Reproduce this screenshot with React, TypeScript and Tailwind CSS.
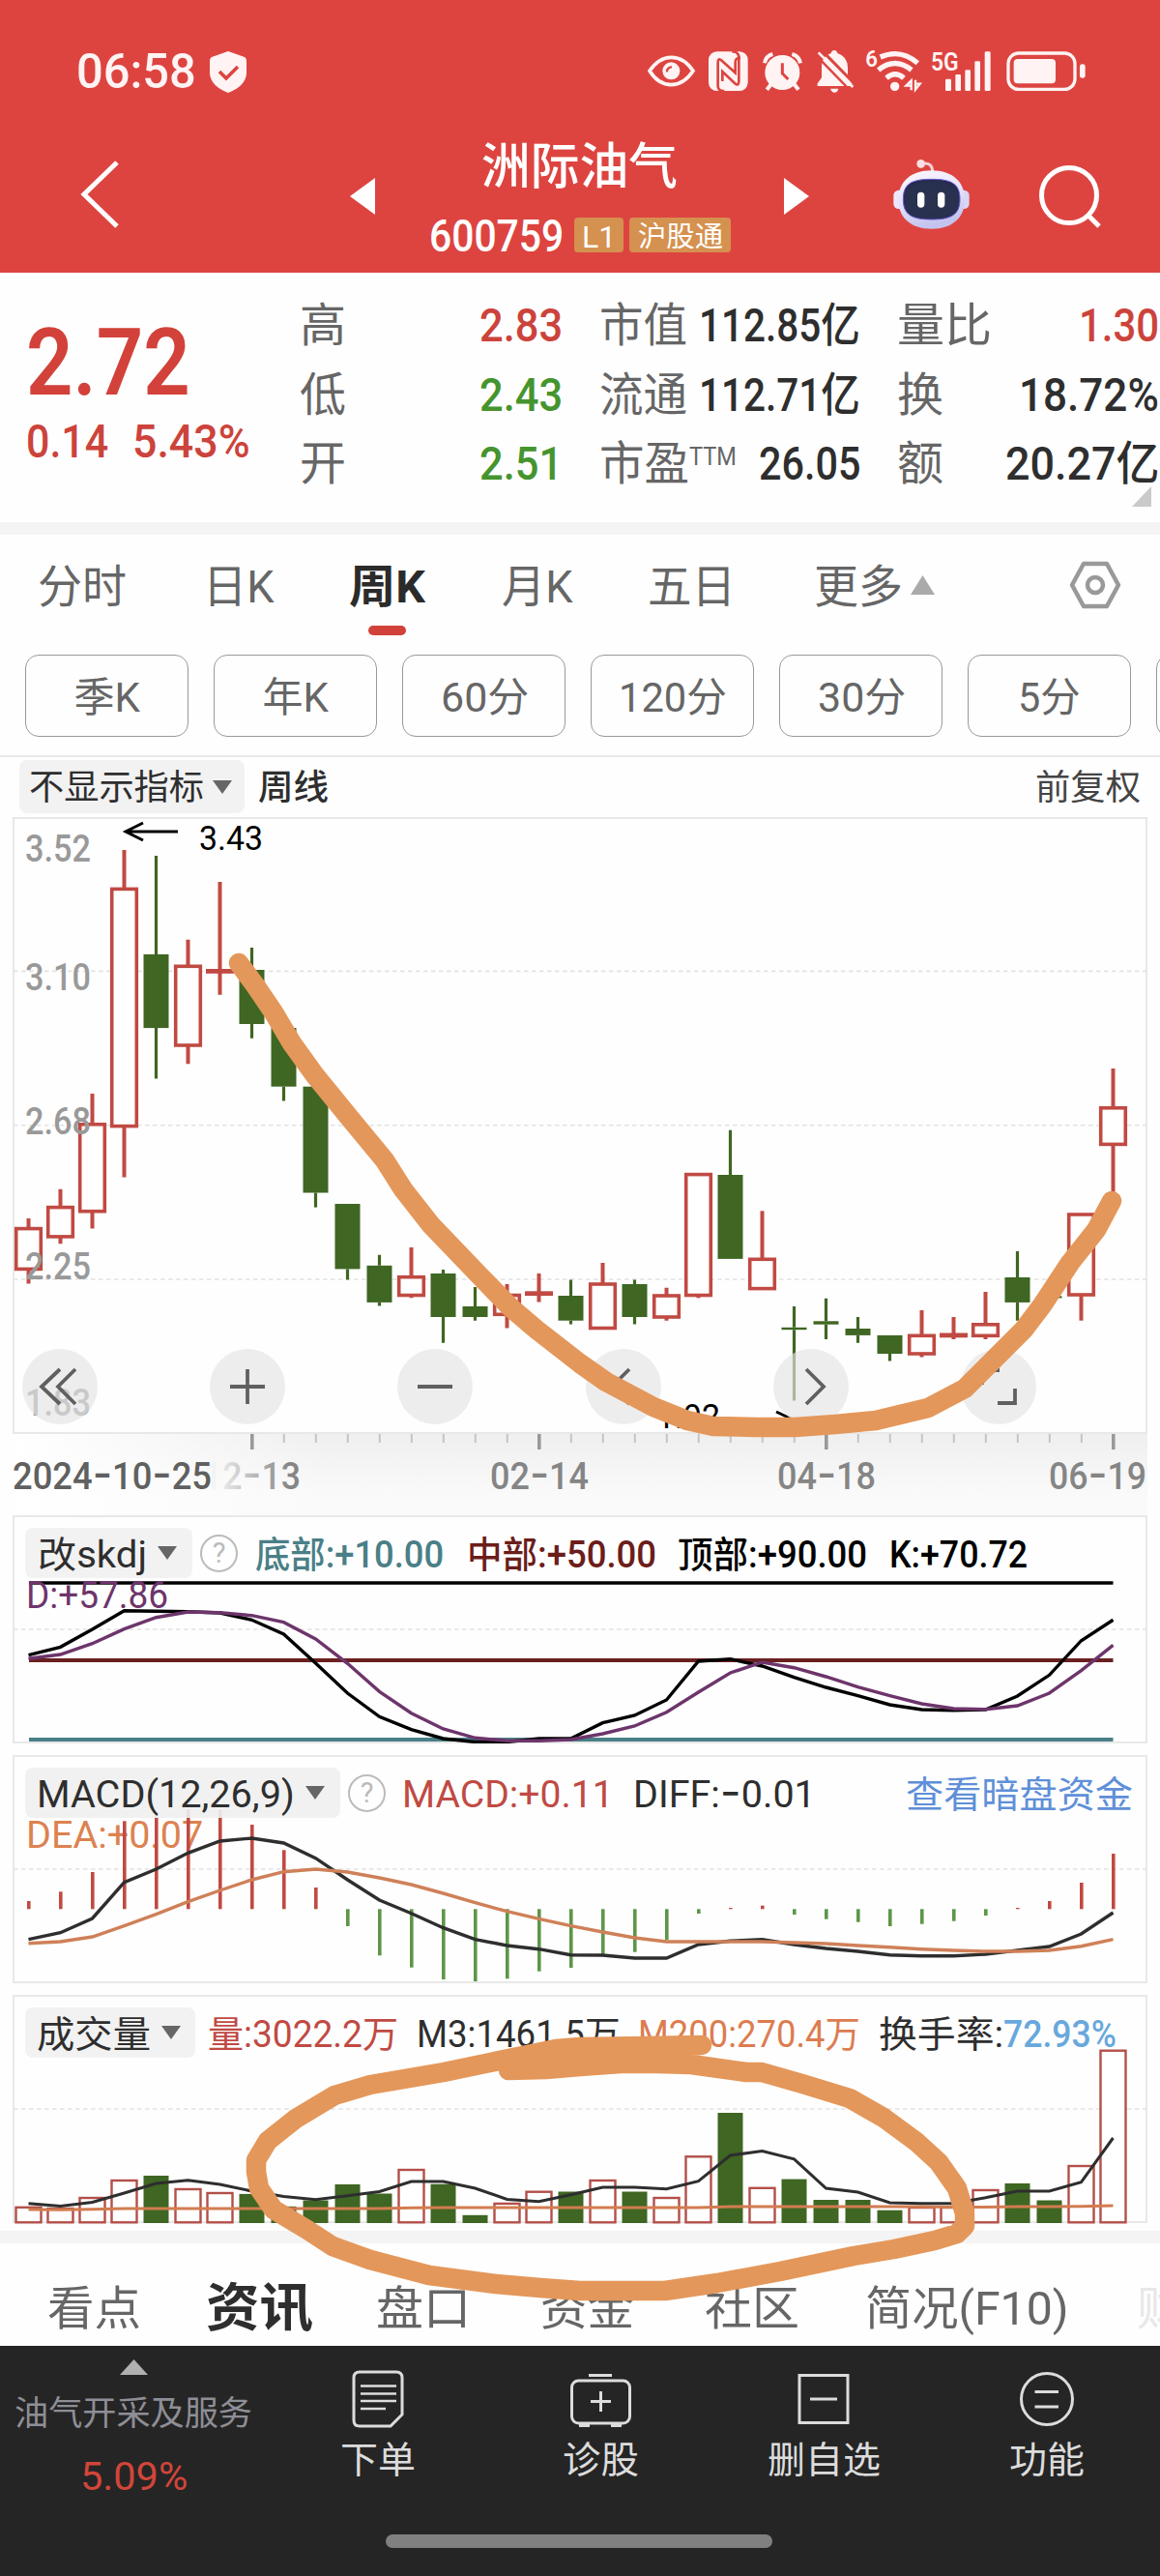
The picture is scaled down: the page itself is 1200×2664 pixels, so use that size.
import { Fragment, useLayoutEffect, useRef, type ReactNode } from 'react'
import clsx from 'clsx'

const RED = '#c04a43'
const GREEN = '#3f6622'
const X0 = 29.5
const STEP = 33
const px = (i: number) => X0 + i * STEP

/** Text that is condensed or widened so that it fills the width of its box. */
function Fit({ className, children }: { className: string; children: ReactNode }) {
  const box = useRef<HTMLSpanElement>(null)
  const inner = useRef<HTMLSpanElement>(null)
  useLayoutEffect(() => {
    const b = box.current
    const t = inner.current
    if (b && t && t.offsetWidth > 0) t.style.transform = `scaleX(${b.clientWidth / t.offsetWidth})`
  })
  return (
    <span ref={box} className={clsx('block shrink-0 whitespace-nowrap', className)}>
      <span ref={inner} className="inline-block origin-left translate-y-[1.5px] align-top">
        {children}
      </span>
    </span>
  )
}

function StatusBar() {
  return (
    <div className="flex h-[147px] items-start text-[#fff3f3]">
      <Fit className="mt-[42px] ml-[79px] w-[124px] text-[50px]/[60px] font-medium">06:58</Fit>
      <svg className="mt-[53px] ml-[14px] h-[43px] w-[38px]" viewBox="0 0 38 43">
        <path d="M19 0 L36 6 Q38 7 38 10 V23 Q37 36 19 43 Q1 36 0 23 V10 Q0 7 2 6Z" fill="#fff3f3" />
        <path d="M10 21 L17 28 L29 16" fill="none" stroke="#dd4440" strokeWidth="3.6" />
      </svg>
      <svg className="mt-[40px] ml-[405px] h-[66px] w-[480px]" viewBox="0 0 1440 198" fill="#fff3f3">
        <path d="M36 100C58 68 82 58 103 58s47 10 68 42c-21 32-45 43-68 43s-47-11-67-43Z" fill="none" stroke="#fff3f3" strokeWidth="11" />
        <circle cx="103" cy="100" r="27" />
        <path d="M90 103a14 14 0 0 1 15-15" fill="none" stroke="#dd4440" strokeWidth="7" />
        <rect x="219" y="40" width="122" height="122" rx="26" />
        <g fill="none" stroke="#dd4440" strokeWidth="8">
          <path d="M268 162H262Q248 160 248 146V74Q248 58 260 68L302 106V74Q302 58 318 60" />
          <path d="M292 40H298Q313 44 313 58V130Q313 150 300 138L262 102V132" />
        </g>
        <circle cx="448" cy="105" r="54" />
        <g fill="none" stroke="#fff3f3" strokeWidth="12">
          <path d="M393 76Q396 54 418 48M504 76Q500 54 478 48M414 140L400 158M484 140L498 158" />
        </g>
        <path d="M448 76V108L466 126" fill="none" stroke="#dd4440" strokeWidth="9" />
        <path d="M609 36q8 0 10 9 32 10 32 46v30l13 18v8H557v-8l13-18V85q0-30 29-40 2-9 10-9Z" />
        <path d="M597 155h25q-3 12-12 12t-13-12Z" />
        <path d="M566 32L676 144" stroke="#dd4440" strokeWidth="9" />
        <path d="M560 43L667 150" stroke="#fff3f3" strokeWidth="8" />
        <path d="M553 52L655 157" stroke="#dd4440" strokeWidth="7" />
        <text x="706" y="88" fontFamily="Roboto" fontWeight="600" fontSize="72" textLength="38" lengthAdjust="spacingAndGlyphs">6</text>
        <g fill="none" stroke="#fff3f3" strokeWidth="16">
          <path d="M752 57Q815 30 868 76M746 97Q798 56 849 97M771 122Q798 99 825 122" />
        </g>
        <circle cx="797" cy="148" r="14" />
        <path d="M848 160V130L832 146H848M861 128V158L875 140H861" fill="none" stroke="#fff3f3" strokeWidth="7" />
        <text x="909" y="100" fontFamily="Roboto" fontWeight="600" fontSize="80" textLength="86" lengthAdjust="spacingAndGlyphs">5G</text>
        <rect x="954" y="125" width="18" height="37" rx="4" />
        <rect x="985" y="111" width="17" height="51" rx="4" />
        <rect x="1015" y="97" width="17" height="65" rx="4" />
        <rect x="1045" y="70" width="17" height="92" rx="4" />
        <rect x="1076" y="40" width="18" height="122" rx="4" />
        <rect x="1149" y="45" width="207" height="112" rx="32" fill="none" stroke="#fff3f3" strokeWidth="10" />
        <rect x="1166" y="63" width="130" height="76" rx="12" />
        <rect x="1371" y="79" width="17" height="43" rx="8" />
      </svg>
    </div>
  )
}

function Robot() {
  return (
    <svg className="h-[74px] w-[80px]" viewBox="0 0 240 222">
      <defs>
        <linearGradient id="shell" x1="0" y1="0" x2="0.3" y2="1">
          <stop offset="0" stopColor="#fdf8ff" />
          <stop offset="0.6" stopColor="#e2e0fa" />
          <stop offset="1" stopColor="#c4c3ee" />
        </linearGradient>
        <radialGradient id="visor" cx="0.5" cy="0.55" r="0.6">
          <stop offset="0" stopColor="#2b3350" />
          <stop offset="0.8" stopColor="#28304f" />
          <stop offset="1" stopColor="#222752" />
        </radialGradient>
      </defs>
      <path d="M90 16Q122 10 122 42" fill="none" stroke="#f7cfd6" strokeWidth="9" />
      <circle cx="86" cy="16" r="13" fill="#fbdfe4" />
      <rect x="1" y="98" width="40" height="58" rx="16" fill="#ece8fb" />
      <rect x="196" y="98" width="40" height="58" rx="16" fill="#d9d6f8" />
      <path d="M119 37C186 37 222 74 222 128S184 218 119 218 16 182 16 128 52 37 119 37Z" fill="url(#shell)" />
      <path d="M119 64C182 64 207 79 207 126S182 189 119 189 31 173 31 126 56 64 119 64Z" fill="url(#visor)" stroke="#6a5ad0" strokeWidth="3" />
      <rect x="75" y="104" width="22" height="48" rx="11" fill="#fff" />
      <rect x="138" y="104" width="22" height="48" rx="11" fill="#fff" />
    </svg>
  )
}

function TitleBar() {
  return (
    <div className="flex h-[135px] items-start text-white">
      <svg className="mt-[17px] ml-[80px] h-[74px] w-[46px] shrink-0" viewBox="0 0 46 74">
        <path d="M41 4L7 37L41 70" fill="none" stroke="#fff" strokeWidth="5" />
      </svg>
      <svg className="mt-[37px] ml-[236px] h-[38px] w-[26px] shrink-0" viewBox="0 0 26 38">
        <path d="M0 19L26 0V38Z" fill="#fff" />
      </svg>
      <div className="ml-[56px] w-[314px] shrink-0">
        <Fit className="-mt-[6px] ml-[54px] w-[203px] text-[51px]/[60px] font-medium">洲际油气</Fit>
        <div className="mt-[13px] flex h-[56px] items-center">
          <Fit className="w-[139px] text-[47px]/[56px] font-medium">600759</Fit>
          <div className="mt-[2px] ml-[11px] flex h-[36px] w-[51px] items-center justify-center rounded-[4px] bg-[#d5914f]">
            <Fit className="w-[35px] text-[32px]/[36px]">L1</Fit>
          </div>
          <div className="mt-[2px] ml-[6px] flex h-[36px] w-[105px] items-center justify-center rounded-[4px] bg-[#d5914f]">
            <Fit className="w-[88px] text-[29px]/[34px]">沪股通</Fit>
          </div>
        </div>
      </div>
      <svg className="mt-[37px] ml-[53px] h-[38px] w-[26px] shrink-0" viewBox="0 0 26 38">
        <path d="M26 19L0 0V38Z" fill="#fff" />
      </svg>
      <div className="mt-[17px] ml-[87px]">
        <Robot />
      </div>
      <svg className="mt-[22px] ml-[69px] h-[68px] w-[70px] shrink-0" viewBox="0 0 70 68">
        <circle cx="33" cy="33" r="28.5" fill="none" stroke="#fff" strokeWidth="5" />
        <path d="M53 54L64 65" stroke="#fff" strokeWidth="5" />
      </svg>
    </div>
  )
}

function Quote() {
  return (
    <section className="relative flex h-[258px] text-[48px]/[72px] text-[#2e2e2e]">
      <div className="ml-[27px] w-[283px] text-[#cc433b]">
        <Fit className="mt-[43px] w-[170px] text-[97px]/[96px] font-semibold text-[#d2423a]">2.72</Fit>
        <div className="-mt-[2px] flex">
          <Fit className="w-[85px] text-[48px]/[72px] font-medium">0.14</Fit>
          <Fit className="ml-[25px] w-[122px] text-[48px]/[72px] font-medium">5.43%</Fit>
        </div>
      </div>
      <div className="mt-[17px] grid w-[310px] auto-rows-[71.5px] grid-cols-[186px_1fr] content-start text-[#666]">
        <Fit className="w-[48px]">高</Fit>
        <Fit className="w-[86px] font-medium text-[#cc433b]">2.83</Fit>
        <Fit className="w-[48px]">低</Fit>
        <Fit className="w-[86px] font-medium text-[#46942e]">2.43</Fit>
        <Fit className="w-[48px]">开</Fit>
        <Fit className="w-[86px] font-medium text-[#46942e]">2.51</Fit>
      </div>
      <div className="mt-[17px] flex w-[308px] flex-col">
        <div className="flex h-[71.5px]">
          <Fit className="w-[91px] text-[#666]">市值</Fit>
          <Fit className="ml-[12px] w-[167px] font-medium">112.85亿</Fit>
        </div>
        <div className="flex h-[71.5px]">
          <Fit className="w-[91px] text-[#666]">流通</Fit>
          <Fit className="ml-[12px] w-[167px] font-medium">112.71亿</Fit>
        </div>
        <div className="flex h-[71.5px]">
          <Fit className="w-[93px] text-[#666]">市盈</Fit>
          <Fit className="w-[49px] text-[26px]/[56px] text-[#666]">TTM</Fit>
          <Fit className="ml-[23px] w-[105px] font-medium">26.05</Fit>
        </div>
      </div>
      <div className="mt-[17px] flex w-[271px] flex-col">
        <div className="flex h-[71.5px] justify-between">
          <Fit className="w-[98px] text-[#666]">量比</Fit>
          <Fit className="w-[83px] font-medium text-[#cc433b]">1.30</Fit>
        </div>
        <div className="flex h-[71.5px] justify-between">
          <Fit className="w-[48px] text-[#666]">换</Fit>
          <Fit className="w-[145px] font-medium">18.72%</Fit>
        </div>
        <div className="flex h-[71.5px] justify-between">
          <Fit className="w-[48px] text-[#666]">额</Fit>
          <Fit className="w-[159px] font-medium">20.27亿</Fit>
        </div>
      </div>
      <svg className="absolute top-[221px] right-[9px] h-[21px] w-[20px]" viewBox="0 0 20 21">
        <path d="M20 0V21H0Z" fill="#cacaca" />
      </svg>
    </section>
  )
}

function PeriodTabs() {
  return (
    <section className="h-[230px] border-b-2 border-[#e8e8e8] text-[47px]/[60px] text-[#666]">
      <div className="flex h-[124px] items-start pt-[22px]">
        <Fit className="ml-[39px] w-[92px]">分时</Fit>
        <Fit className="ml-[79px] w-[74px]">日K</Fit>
        <div className="ml-[77px] flex flex-col items-center">
          <Fit className="w-[79px] font-bold text-[#2b2b2b]">周K</Fit>
          <span className="mt-[12px] h-[10px] w-[39px] rounded-full bg-[#d2423a]" />
        </div>
        <Fit className="ml-[79px] w-[74px]">月K</Fit>
        <Fit className="ml-[77px] w-[91px]">五日</Fit>
        <Fit className="ml-[81px] w-[92px]">更多</Fit>
        <svg className="mt-[20px] ml-[8px] h-[20px] w-[25px]" viewBox="0 0 25 20">
          <path d="M12.5 0L25 20H0Z" fill="#aaa" />
        </svg>
        <svg className="mt-[5px] ml-[139px] h-[50px] w-[54px]" viewBox="0 0 54 50" fill="none" stroke="#999" strokeWidth="4.5" strokeLinejoin="round">
          <path d="M15 3H39L51 25L39 47H15L3 25Z" />
          <circle cx="27" cy="25" r="8" />
        </svg>
      </div>
      <div className="flex gap-[26px] overflow-hidden pl-[26px] text-[42px]/[60px]">
        {[
          ['季K', 'w-[68px]'],
          ['年K', 'w-[68px]'],
          ['60分', 'w-[91px]'],
          ['120分', 'w-[112px]'],
          ['30分', 'w-[91px]'],
          ['5分', 'w-[65px]'],
          ['', 'w-[65px]'],
        ].map(([label, width], i) => (
          <button key={i} className="flex h-[85px] w-[169px] shrink-0 items-center justify-center rounded-[14px] border-[1.5px] border-[#999]">
            <Fit className={width}>{label}</Fit>
          </button>
        ))}
      </div>
    </section>
  )
}

function Caret({ className }: { className?: string }) {
  return (
    <svg className={clsx('h-[14px] w-[20px] shrink-0', className)} viewBox="0 0 20 14">
      <path d="M0 0H20L10 14Z" fill="#666" />
    </svg>
  )
}

function Help() {
  return (
    <span className="flex size-[39px] shrink-0 items-center justify-center rounded-full border-[2.5px] border-[#bbb] text-[29px]/[32px] text-[#bbb]">
      ?
    </span>
  )
}

type Candle = [high: number, top: number, bottom: number, low: number, up: 0 | 1]
const candles: Candle[] = [
  [1260, 1270.6, 1312.4, 1327.6, 1], [1229.8, 1248.6, 1278.9, 1286.2, 1], [1131, 1162.8, 1252.7, 1270.6, 1],
  [879, 919.4, 1164.6, 1217.4, 1], [885, 986.9, 1063.1, 1115.5, 0], [971.8, 999.3, 1081, 1100.3, 1],
  [912, 1004.4, 1004.4, 1028.7, 1], [980, 1003, 1059, 1073.7, 0], [1048, 1063, 1123.7, 1138.4, 0],
  [1123.7, 1123.7, 1233.5, 1248.6, 0], [1245, 1245, 1312.4, 1323.5, 0], [1297.8, 1308.8, 1346.9, 1350.5, 0],
  [1290, 1320.7, 1339.5, 1342.3, 1], [1312.9, 1317, 1362, 1388.7, 0], [1331, 1351, 1362, 1365.7, 0],
  [1328, 1339.5, 1359.3, 1373.5, 1], [1317, 1337.7, 1337.7, 1346.4, 1], [1323.5, 1340, 1365.7, 1369.4, 0],
  [1306, 1328, 1373.5, 1373.5, 1], [1323.5, 1328, 1362, 1369.4, 0], [1331.7, 1340, 1362, 1365.7, 1],
  [1214.6, 1214.6, 1339.5, 1342.3, 1], [1168.7, 1215, 1301.9, 1301.9, 0], [1252.3, 1302.3, 1332.6, 1332.6, 1],
  [1351, 1372.8, 1375.2, 1448.4, 0], [1342.7, 1366.3, 1369.7, 1385, 0], [1362, 1374, 1380.9, 1388.7, 0],
  [1380.9, 1380.9, 1400, 1407.5, 0], [1355, 1381.3, 1400, 1403.4, 1], [1362, 1380.9, 1380.9, 1385, 1],
  [1335.9, 1369.8, 1381.3, 1385, 1], [1294, 1321, 1346.9, 1365.7, 0], [1340, 1340.4, 1342.4, 1343, 0],
  [1256, 1256, 1339, 1365.7, 1], [1105, 1145.8, 1183.4, 1240, 1],
]

const kLine = [1711.7, 1703.3, 1685, 1665.7, 1666.3, 1666.7, 1668, 1675.3, 1690, 1720, 1751, 1775.3, 1788.7, 1798, 1801.5, 1801.5, 1798, 1798, 1781.7, 1774, 1758, 1718, 1715.7, 1723, 1734.7, 1745, 1753.7, 1763, 1768, 1768.7, 1768, 1754, 1732.3, 1696.7, 1675.3]
const dLine = [1715.3, 1711, 1699.7, 1684.7, 1672.7, 1667, 1667.7, 1670.7, 1677.7, 1695, 1720.3, 1749.3, 1771.7, 1788, 1797.3, 1800.3, 1800.3, 1799, 1793, 1785, 1770.7, 1750, 1730, 1719, 1724.7, 1734, 1744.7, 1753.7, 1762, 1767, 1767.7, 1764, 1751, 1727.7, 1701.3]
const macd = [1966, 1956.3, 1936, 1883.3, 1879.3, 1871, 1871.7, 1887, 1913.3, 1952, 1992, 2022.3, 2034.7, 2047, 2049, 2046.3, 2038.7, 2035, 2021, 2018.7, 2006, 1979, 1973, 1970.7, 1980, 1984.7, 1987.7, 1992, 1989.7, 1986.7, 1981, 1973, 1966, 1947, 1917]
const diff = [2005.7, 1998.7, 1984, 1946.7, 1933, 1916.3, 1904, 1901, 1906, 1921.7, 1944, 1965, 1978.7, 1993.7, 2005.7, 2012, 2015.7, 2021.7, 2022, 2025, 2025, 2011, 2007.3, 2005.7, 2011, 2015, 2018, 2021.7, 2022.7, 2022.7, 2021, 2017, 2013, 2000, 1978]
const dea = [2009.7, 2008, 2003, 1991.7, 1979.7, 1966.7, 1955, 1944, 1935.7, 1933, 1936, 1942, 1949, 1958, 1967.7, 1976.7, 1984.3, 1991.7, 1998, 2004, 2008, 2008, 2008, 2008, 2009, 2010, 2012, 2013.7, 2015.7, 2017, 2018, 2018, 2017, 2012.7, 2005.7]
const volume = [2281.8, 2283, 2272, 2254, 2250, 2263, 2267, 2268.9, 2281.8, 2275.5, 2259, 2268.5, 2243, 2258.7, 2290.8, 2277.9, 2265.7, 2266.5, 2254, 2266.5, 2272, 2229.3, 2185, 2261.8, 2253.6, 2275, 2275, 2285.7, 2282, 2282, 2264, 2258, 2275.5, 2239, 2119.7]
const m3 = [2278.7, 2281.4, 2277.5, 2268, 2258, 2254.8, 2259, 2266, 2271.6, 2274.7, 2270.8, 2266.5, 2256, 2256, 2263, 2274.4, 2276.7, 2269.7, 2262, 2262, 2263.8, 2255.6, 2229, 2224.6, 2232.9, 2263, 2267, 2277.9, 2278.7, 2278.7, 2272.8, 2266, 2266, 2256.7, 2211]
const m200 = [2285, 2285.2, 2284.8, 2284, 2284, 2284, 2284, 2284, 2284, 2284, 2284, 2284, 2283.2, 2283, 2283, 2283, 2283, 2283, 2283, 2283, 2283, 2283, 2282, 2282, 2282, 2282, 2282, 2282, 2282, 2282.4, 2282.4, 2282, 2282, 2281.8, 2281]

const line = (ys: number[]) => ys.map((y, i) => `${px(i)},${y}`).join(' ')

function Grid({ y }: { y: number }) {
  return <path d={`M14 ${y}H1186`} stroke="#e2e2e2" strokeWidth="1.6" strokeDasharray="4.5 3.5" />
}

function PriceChart() {
  const labels: [string, number][] = [['3.52', 877], ['3.10', 1010], ['2.68', 1159], ['2.25', 1309], ['1.83', 1450]]
  return (
    <div className="relative mx-[13px] h-[638px] border-2 border-[#e8e8e8]">
      <svg className="absolute -top-[2px] -left-[2px] h-[638px] w-[1174px]" viewBox="13 845 1174 638" fontFamily="Roboto">
        <Grid y={1004.4} />
        <Grid y={1163.7} />
        <Grid y={1323} />
        {candles.map(([high, top, bottom, low, up], i) => {
          const x = px(i)
          const color = up ? RED : GREEN
          return (
            <g key={i} fill={color} stroke={color}>
              <path d={`M${x} ${high}V${top}M${x} ${bottom}V${low}`} strokeWidth={up ? 4 : 3.2} />
              {up && bottom > top ? (
                <rect x={x - 12.8} y={top} width="25.6" height={bottom - top} fill="#fff" strokeWidth="3.6" />
              ) : (
                <rect x={x - (up ? 14.5 : 13)} y={up ? top - 2.4 : top} width={up ? 29 : 26} height={up ? 4.8 : bottom - top} stroke="none" />
              )}
            </g>
          )
        })}
        {labels.map(([text, y]) => (
          <text key={text} x="26" y={y + 14} fontSize="39" fontWeight="500" fill="#999" textLength="68" lengthAdjust="spacingAndGlyphs">
            {text}
          </text>
        ))}
        <path d="M184 860H130M148 851L130 860L148 869" fill="none" stroke="#000" strokeWidth="3" />
        <text x="206" y="879" fontSize="35" textLength="66" lengthAdjust="spacingAndGlyphs">3.43</text>
        <path d="M766 1469H822M803 1460L822 1469L803 1478" fill="none" stroke="#000" strokeWidth="3" />
        <text x="679" y="1477" fontSize="35" textLength="66" lengthAdjust="spacingAndGlyphs">1.92</text>
      </svg>
      <div className="absolute bottom-[8px] left-[8px] flex gap-[116.2px]">
        {[
          'M39 21L20 39L39 57M55 21L37 39L55 57',
          'M39 21V57M21 39H57',
          'M21 39H57',
          'M45 21L27 39L45 57',
          'M34 21L52 39L34 57',
          'M38 56H56V41M40 22H22V37',
        ].map((d) => (
          <button key={d} className="size-[78px] rounded-full bg-[#e4e4e4]/65">
            <svg viewBox="0 0 78 78">
              <path d={d} fill="none" stroke="#606060" strokeWidth="3.8" />
            </svg>
          </button>
        ))}
      </div>
    </div>
  )
}

/** A date label whose dashes are set wider than Roboto's own. */
function DateText({ text, x, length, fill }: { text: string; x: number; length: number; fill: string }) {
  return (
    <text x={x} y="1540" fill={fill} textLength={length} lengthAdjust="spacingAndGlyphs">
      {text.split('-').map((part, i) => (
        <Fragment key={i}>
          {i > 0 && <tspan fontFamily="Inter" fontSize="46">-</tspan>}
          <tspan>{part}</tspan>
        </Fragment>
      ))}
    </text>
  )
}

function DateAxis() {
  return (
    <svg className="ml-[13px] h-[84px] w-[1174px]" viewBox="13 1483 1174 84" fontFamily="Roboto" fontWeight="500" fontSize="38">
      <defs>
        <linearGradient id="axisShade" x1="0" y1="0" x2="0" y2="1">
          <stop offset="0" stopColor="#efefef" />
          <stop offset="0.75" stopColor="#fafafa" />
          <stop offset="1" stopColor="#fafafa" />
        </linearGradient>
        <linearGradient id="axisFade" x1="0" y1="0" x2="1" y2="0">
          <stop offset="0" stopColor="#fff" />
          <stop offset="1" stopColor="#fff" stopOpacity="0" />
        </linearGradient>
        <linearGradient id="dateFade" gradientUnits="userSpaceOnUse" x1="222" y1="0" x2="300" y2="0">
          <stop offset="0" stopColor="#858585" stopOpacity="0.05" />
          <stop offset="1" stopColor="#858585" />
        </linearGradient>
      </defs>
      <rect x="13" y="1483" width="1174" height="84" fill="url(#axisShade)" />
      <rect x="13" y="1483" width="330" height="84" fill="url(#axisFade)" />
      {Array.from({ length: 28 }, (_, n) => n + 7).map((i) => {
        const major = (i - 7) % 9 === 0
        return <path key={i} d={`M${px(i) + 0.3} 1483V${major ? 1499 : 1492}`} stroke={major ? '#999' : '#c4c4c4'} strokeWidth={major ? 3.6 : 2} />
      })}
      <DateText text="12-13" x={210} length={101} fill="url(#dateFade)" />
      <DateText text="02-14" x={507} length={102} fill="#858585" />
      <DateText text="04-18" x={804} length={102} fill="#858585" />
      <DateText text="06-19" x={1085} length={101} fill="#858585" />
      <DateText text="2024-10-25" x={13} length={206} fill="#606060" />
    </svg>
  )
}

function SkdjPanel() {
  return (
    <section className="relative mx-[13px] h-[236px] border-2 border-[#e8e8e8] text-[38px]/[52px]">
      <svg className="absolute -top-[2px] -left-[2px] h-[236px] w-[1174px]" viewBox="13 1567 1174 236" fill="none" strokeWidth="3.4">
        <Grid y={1685} />
        <path d="M30 1637H1151.5" stroke="#000" strokeWidth="3.6" />
        <path d="M30 1717H1151.5" stroke="#6b2020" strokeWidth="3.8" />
        <path d="M30 1799H1151.5" stroke="#4a7f87" strokeWidth="4" />
        <polyline points={line(kLine)} stroke="#000" />
        <polyline points={line(dLine)} stroke="#6d356b" />
      </svg>
      <div className="relative mt-[11px] ml-[11px] flex h-[52px] items-center">
        <div className="flex h-[52px] w-[173px] items-center rounded-[8px] bg-[#f2f2f2] pl-[13px] text-[#2e2e2e]">
          <Fit className="w-[113px]">改skdj</Fit>
          <Caret className="ml-[11px]" />
        </div>
        <div className="ml-[8px]"><Help /></div>
        <Fit className="ml-[18px] w-[195px] font-medium text-[#4a7f87]">底部:+10.00</Fit>
        <Fit className="ml-[24px] w-[196px] font-medium text-[#6b1d1a]">中部:+50.00</Fit>
        <Fit className="ml-[22px] w-[196px] font-medium text-black">顶部:+90.00</Fit>
        <Fit className="ml-[23px] w-[143px] font-medium text-black">K:+70.72</Fit>
      </div>
      <Fit className="relative -mt-[10px] ml-[12px] w-[147px] text-[#6d356b]">D:+57.86</Fit>
    </section>
  )
}

function MacdPanel() {
  return (
    <section className="relative mx-[13px] mt-[12px] h-[236px] border-2 border-[#e8e8e8] text-[38px]/[52px]">
      <div className="mt-[63px] ml-[12px] h-0">
        <Fit className="-mt-[10px] w-[183px] text-[#dc8250]">DEA:+0.07</Fit>
      </div>
      <svg className="absolute -top-[2px] -left-[2px] h-[236px] w-[1174px]" viewBox="13 1815 1174 236" fill="none" strokeWidth="3.4">
        <Grid y={1933} />
        {macd.map((y, i) => (
          <path key={i} d={`M${px(i) + 0.3} 1974.3V${y}`} stroke={y > 1974.3 ? '#5d9648' : RED} strokeWidth="3.6" />
        ))}
        <polyline points={line(diff)} stroke="#2e2e2e" />
        <polyline points={line(dea)} stroke="#cf8058" />
      </svg>
      <div className="absolute top-[11px] left-[11px] flex h-[52px] w-[1160px] items-center">
        <div className="flex h-[52px] w-[326px] items-center rounded-[8px] bg-[#f0f0f0]/90 pl-[12px] text-[#2e2e2e]">
          <Fit className="w-[267px]">MACD(12,26,9)</Fit>
          <Caret className="ml-[11px]" />
        </div>
        <div className="ml-[8px]"><Help /></div>
        <Fit className="ml-[17px] w-[219px] text-[#c04a43]">MACD:+0.11</Fit>
        <Fit className="ml-[20px] w-[189px] text-[#2e2e2e]">
          DIFF:<span className="font-['Inter'] text-[46px]/[40px]">-</span>0.01
        </Fit>
        <Fit className="ml-[93px] w-[235px] text-[#5f8fd8]">查看暗盘资金</Fit>
      </div>
    </section>
  )
}

function VolumePanel() {
  return (
    <section className="relative mx-[13px] mt-[12px] h-[236px] border-2 border-[#e8e8e8] text-[38px]/[52px]">
      <svg className="absolute -top-[2px] -left-[2px] h-[238px] w-[1174px]" viewBox="13 2063 1174 238" fill="none" strokeWidth="3">
        <Grid y={2181} />
        {volume.map((y, i) =>
          candles[i][4] ? (
            <rect key={i} x={px(i) - 13} y={y + 1} width="26" height={2298.3 - y - 1} fill="#fff" stroke="#b34f49" strokeWidth="2.4" />
          ) : (
            <rect key={i} x={px(i) - 13} y={y} width="26" height={2299 - y} fill={GREEN} />
          ),
        )}
        <polyline points={line(m200)} stroke="#d27c50" />
        <polyline points={line(m3)} stroke="#2e2e2e" />
      </svg>
      <div className="relative mt-[11px] ml-[11px] flex h-[52px] items-center">
        <div className="flex h-[52px] w-[176px] items-center rounded-[8px] bg-[#f2f2f2] pl-[12px] text-[#2e2e2e]">
          <Fit className="w-[118px]">成交量</Fit>
          <Caret className="ml-[11px]" />
        </div>
        <Fit className="ml-[13px] w-[197px] text-[#c04a43]">量:3022.2万</Fit>
        <Fit className="ml-[19px] w-[211px] text-[#2e2e2e]">M3:1461.5万</Fit>
        <Fit className="ml-[18px] w-[230px] text-[#dc7c50]">M200:270.4万</Fit>
        <Fit className="ml-[19px] w-[129px] text-[#2e2e2e]">换手率:</Fit>
        <Fit className="w-[117px] font-medium text-[#68a8dc]">72.93%</Fit>
      </div>
    </section>
  )
}

function InfoTabs() {
  return (
    <section className="flex h-[119px] items-center overflow-hidden border-t-[13px] border-[#f4f4f4] text-[48px]/[60px] text-[#666]">
      <div className="flex items-center pt-[25px]">
        <Fit className="ml-[49px] w-[97px]">看点</Fit>
        <Fit className="ml-[67px] w-[111px] text-[54px]/[60px] font-bold text-[#2e2e2e]">资讯</Fit>
        <Fit className="ml-[65px] w-[98px]">盘口</Fit>
        <Fit className="ml-[72px] w-[97px]">资金</Fit>
        <Fit className="ml-[73px] w-[98px]">社区</Fit>
        <Fit className="ml-[68px] w-[211px]">简况(F10)</Fit>
        <Fit className="ml-[70px] w-[48px] text-[#e8e8e8]">财</Fit>
      </div>
    </section>
  )
}

function BottomNav() {
  return (
    <nav className="h-[238px] bg-[#252525] text-[38px]/[50px] text-[#dcdcdc]">
      <div className="flex h-[195px]">
        <div className="ml-[15px] flex w-[246px] flex-col items-center">
          <svg className="mt-[14px] h-[16px] w-[29px]" viewBox="0 0 29 16">
            <path d="M14.5 0L29 16H0Z" fill="#b0b0b0" />
          </svg>
          <Fit className="mt-[16px] w-[246px] text-[35px]/[46px] text-[#8e8e96]">油气开采及服务</Fit>
          <Fit className="mt-[17px] w-[111px] text-[40px]/[50px] text-[#d2453a]">5.09%</Fit>
        </div>
        <div className="ml-[90px] flex w-[79px] flex-col items-center">
          <svg className="mt-[25px] h-[60px] w-[54px]" viewBox="0 0 54 60" fill="none" stroke="#dcdcdc" strokeWidth="3">
            <path d="M8 2H46Q52 2 52 8V46L40 58H8Q2 58 2 52V8Q2 2 8 2Z" />
            <path d="M9 16.500H46M9 24.500H46M9 32H46M9 40H35" strokeWidth="2.600" />
          </svg>
          <Fit className="mt-[6px] w-[78px]">下单</Fit>
        </div>
        <div className="ml-[151px] flex w-[80px] flex-col items-center">
          <svg className="mt-[25px] h-[60px] w-[66px]" viewBox="0 0 66 60" fill="none" stroke="#dcdcdc" strokeWidth="3">
            <rect x="3.500" y="11" width="60" height="44" rx="7" />
            <path d="M21 5.500H45M33.500 22V43M23 32.500H44" />
            <path d="M11 57H22M44 57H55" strokeWidth="4" />
          </svg>
          <Fit className="mt-[6px] w-[79px]">诊股</Fit>
        </div>
        <div className="ml-[132px] flex w-[118px] flex-col items-center">
          <svg className="mt-[25px] h-[60px] w-[54px]" viewBox="0 0 54 60" fill="none" stroke="#dcdcdc" strokeWidth="3">
            <rect x="2" y="5.500" width="50" height="49" />
            <path d="M13 30H41" />
          </svg>
          <Fit className="mt-[6px] w-[117px]">删自选</Fit>
        </div>
        <div className="ml-[132px] flex w-[79px] flex-col items-center">
          <svg className="mt-[25px] h-[60px] w-[58px]" viewBox="0 0 58 60" fill="none" stroke="#dcdcdc" strokeWidth="3">
            <circle cx="29" cy="30" r="26.500" />
            <path d="M16.500 22.500H41M16.500 38H41" />
          </svg>
          <Fit className="mt-[6px] w-[78px]">功能</Fit>
        </div>
      </div>
      <div className="ml-[399px] h-[14px] w-[400px] rounded-full bg-[#808080]" />
    </nav>
  )
}

/** Hand-drawn marks over the page: the arc under the price and the loop around the volume. */
function Annotations() {
  const arc =
    '247,996 264,1019 283,1047 302,1079 325,1111 360,1154 398,1200 417,1230 446,1267 494,1317 528,1352 555,1375 600,1410 627,1429 676,1455 711,1469 738,1475 784,1476 822,1476 864,1473 906,1469 960,1456 998,1436 1032,1402 1059,1375 1078,1350 1107,1306 1134,1272 1150,1242'
  const loop =
    '526,2141 565,2140 600,2137 642,2134 680,2134 715,2135 772,2143 788,2143 830,2155 879,2170 914,2190 948,2215 971,2236 990,2263 998,2289 998,2302 990,2310 967,2317 925,2326 883,2333 807,2349 742,2361 688,2369 600,2369 559,2366 513,2362 444,2353 383,2337 344,2323 318,2306 283,2285 268,2263 265,2246 265,2234 277,2214 306,2191 346,2167 383,2156 459,2143 536,2127 575,2119 600,2117 669,2116 726,2115'
  return (
    <svg className="pointer-events-none absolute inset-0 h-[2664px] w-[1200px]" viewBox="0 0 1200 2664" fill="none" stroke="#e4975a" strokeWidth="20.5" strokeLinecap="round" strokeLinejoin="round">
      <polyline points={arc} />
      <polyline points={loop} />
    </svg>
  )
}

export default function App() {
  return (
    <main className="relative h-[2664px] w-[1200px] overflow-hidden bg-[#fefefe] font-['Roboto','Noto_Sans_CJK_SC',sans-serif]">
      <header className="h-[282px] bg-[#dd4440]">
        <StatusBar />
        <TitleBar />
      </header>
      <Quote />
      <div className="h-[13px] bg-[#f4f4f4]" />
      <PeriodTabs />
      <div className="flex h-[62px] items-start pt-[3px] pl-[20px] text-[36px]/[55px] text-[#2e2e2e]">
        <div className="flex h-[55px] w-[233px] items-center rounded-[8px] bg-[#f2f2f2] pl-[10px]">
          <Fit className="w-[181px]">不显示指标</Fit>
          <Caret className="ml-[9px]" />
        </div>
        <Fit className="ml-[14px] w-[73px] font-medium">周线</Fit>
        <Fit className="ml-[731px] w-[109px] text-[#444]">前复权</Fit>
      </div>
      <PriceChart />
      <DateAxis />
      <SkdjPanel />
      <MacdPanel />
      <VolumePanel />
      <div className="h-[8px]" />
      <InfoTabs />
      <BottomNav />
      <Annotations />
    </main>
  )
}
